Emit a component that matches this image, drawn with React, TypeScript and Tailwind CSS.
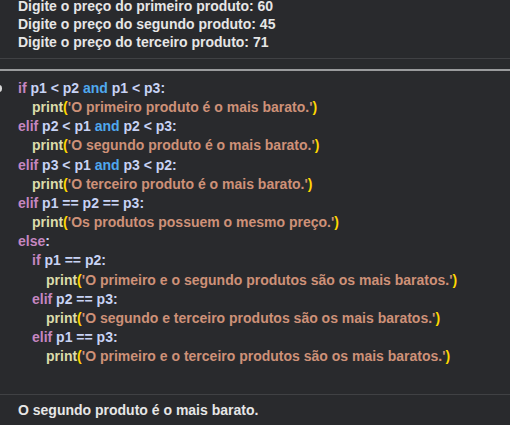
const K = "text-[#c586c0]";
const A = "text-[#4fa8ef]";
const V = "text-[#c8d3f5]";
const F = "text-[#dcdcaa]";
const P = "text-[#ffd700]";
const S = "text-[#ce9178]";

const Print: React.FC<{ text: string }> = ({ text }) => (
  <>
    <span className={F}>print</span>
    <span className={P}>(</span>
    <span className={S}>'{text}'</span>
    <span className={P}>)</span>
  </>
);

const Line: React.FC<{ indent?: number; children: React.ReactNode }> = ({
  indent = 0,
  children,
}) => (
  <div
    className={
      indent === 0 ? "pl-0" : indent === 1 ? "pl-[14px]" : "pl-[28px]"
    }
  >
    {children}
  </div>
);

export default function App() {
  return (
    <div
      className="h-[425px] w-[510px] overflow-hidden bg-[#292a2d] text-[14px] font-bold text-[#e6e6e6]"
      style={{ fontFamily: '"Liberation Sans", Arial, sans-serif' }}
    >
      <div className="-mt-[3px] flex flex-col pl-[18px] leading-[18px]">
        <div>Digite o preço do primeiro produto: 60</div>
        <div>Digite o preço do segundo produto: 45</div>
        <div>Digite o preço do terceiro produto: 71</div>
      </div>

      <div className="mt-[7px] h-px bg-[#404144]" />
      <div className="mt-[10px] h-[2px] bg-[#9a9b9d]" />

      <div className="relative mt-[8px] pl-[18px] leading-[19.15px]">
        <div className="absolute -left-[4px] top-[6px] h-[7px] w-[6px] rounded-full bg-[#d8d8d8]" />
        <Line>
          <span className={K}>if</span>
          <span className={V}> p1 &lt; p2 </span>
          <span className={A}>and</span>
          <span className={V}> p1 &lt; p3:</span>
        </Line>
        <Line indent={1}>
          <Print text="O primeiro produto é o mais barato." />
        </Line>
        <Line>
          <span className={K}>elif</span>
          <span className={V}> p2 &lt; p1 </span>
          <span className={A}>and</span>
          <span className={V}> p2 &lt; p3:</span>
        </Line>
        <Line indent={1}>
          <Print text="O segundo produto é o mais barato." />
        </Line>
        <Line>
          <span className={K}>elif</span>
          <span className={V}> p3 &lt; p1 </span>
          <span className={A}>and</span>
          <span className={V}> p3 &lt; p2:</span>
        </Line>
        <Line indent={1}>
          <Print text="O terceiro produto é o mais barato." />
        </Line>
        <Line>
          <span className={K}>elif</span>
          <span className={V}> p1 == p2 == p3:</span>
        </Line>
        <Line indent={1}>
          <Print text="Os produtos possuem o mesmo preço." />
        </Line>
        <Line>
          <span className={K}>else</span>
          <span className={V}>:</span>
        </Line>
        <Line indent={1}>
          <span className={K}>if</span>
          <span className={V}> p1 == p2:</span>
        </Line>
        <Line indent={2}>
          <Print text="O primeiro e o segundo produtos são os mais baratos." />
        </Line>
        <Line indent={1}>
          <span className={K}>elif</span>
          <span className={V}> p2 == p3:</span>
        </Line>
        <Line indent={2}>
          <Print text="O segundo e terceiro produtos são os mais baratos." />
        </Line>
        <Line indent={1}>
          <span className={K}>elif</span>
          <span className={V}> p1 == p3:</span>
        </Line>
        <Line indent={2}>
          <Print text="O primeiro e o terceiro produtos são os mais baratos." />
        </Line>
      </div>

      <div className="mt-[28px] h-px bg-[#404144]" />
      <div className="pl-[18px] pt-[6px] leading-[18px]">
        O segundo produto é o mais barato.
      </div>
    </div>
  );
}
